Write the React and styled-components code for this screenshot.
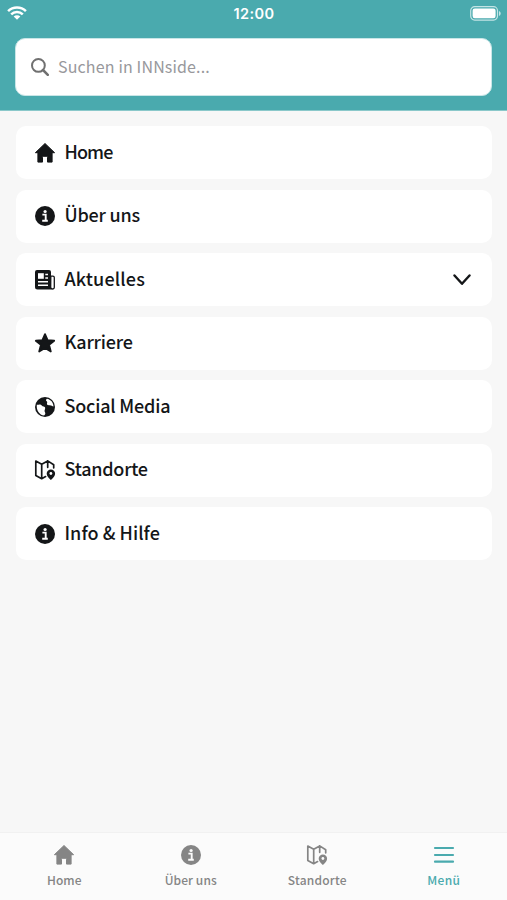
import React from "react";
import styled, { createGlobalStyle } from "styled-components";

const GlobalStyle = createGlobalStyle`
  * {
    box-sizing: border-box;
  }
  body {
    margin: 0;
    background: #f7f7f7;
    font-family: "Noto Sans CJK SC", "Noto Sans", sans-serif;
  }
`;

const HomeIcon = () => (
  <svg viewBox="0 0 20 20">
    <path
      d="M10 .5 19.6 9.7h-2.5v9.4h-4.6v-4.6q0-1.2-1.2-1.2H8.7q-1.2 0-1.2 1.2v4.6H2.9V9.7H.4Z"
      fill="currentColor"
      stroke="currentColor"
      strokeWidth="1"
      strokeLinejoin="round"
    />
  </svg>
);

const InfoIcon = ({ hole = "#fff" }) => (
  <svg viewBox="0 0 20 20">
    <circle cx="10" cy="10" r="10" fill="currentColor" />
    <circle cx="10.1" cy="5.5" r="1.6" fill={hole} />
    <path
      d="M7.4 8.6h3.3v6M7.2 14.7h5.6"
      fill="none"
      stroke={hole}
      strokeWidth="1.9"
    />
  </svg>
);

const NewsIcon = () => (
  <svg viewBox="0 0 20 20" fill="none" stroke="currentColor">
    <path d="M15.8 6.2h2.1a1.4 1.4 0 0 1 1.4 1.4v9.6a1.8 1.8 0 0 1-3.6 0Z" strokeWidth="1.3" />
    <path
      d="M2 0h12a2 2 0 0 1 2 2v15.5q0 1.5 1 2H2.5A2.5 2.5 0 0 1 0 17V2a2 2 0 0 1 2-2Z"
      fill="currentColor"
      stroke="none"
    />
    <path d="M3 3.2h5.8v5.6H3Z" fill="#fff" stroke="none" />
    <path d="M10.300 4.500h2.700M10.300 8h2.700M3 11.700h10M3 15.200h10" stroke="#fff" strokeWidth="1.4" />
  </svg>
);

const StarIcon = () => (
  <svg viewBox="0 0 20 20">
    <path
      d="m10 1.1 2.6 6.1 6.6.5-5.1 4.200 1.700 6.600L10 15l-5.800 3.500 1.700-6.600L.8 7.700l6.600-.5Z"
      fill="currentColor"
      stroke="currentColor"
      strokeWidth="1.8"
      strokeLinejoin="round"
    />
  </svg>
);

const GlobeIcon = () => (
  <svg viewBox="0 0 20 20">
    <circle cx="10" cy="10" r="10" fill="currentColor" />
    <path
      d="M1.8 7.7C3.6 7.7 4.600 7 5.800 7.700 7 8.400 6.900 9.300 8.600 9.600 10.700 10 10.300 11.700 9.700 13 9.100 14.500 10.300 15.200 10.300 16.300 10.300 17.300 9.800 17.800 9.100 18.500 4.300 17.900 1.200 13.400 1.800 7.700Z"
      fill="#fff"
    />
    <path
      d="M11.900 1.700C15.700 2.300 18.400 5.400 18.500 9.500 17.100 9.400 16.300 8 14.400 8.300 12.600 8.500 11.600 7.500 12 6.300 12.400 5.200 12.300 4.600 11.400 3.900 10.600 3.200 11.200 2.400 11.900 1.700Z"
      fill="#fff"
    />
  </svg>
);

const MapIcon = ({ hole = "#fff" }) => (
  <svg viewBox="0 0 20 20" fill="none">
    <path
      d="M10.600 16.600 6.700 18.700.8 15.400V1.100l5.900 3.200 6-3.400 6 3.800v3.100M6.700 4.300v14.400M12.700.9v6.400"
      stroke="currentColor"
      strokeWidth="1.7"
      strokeLinejoin="round"
      strokeLinecap="round"
    />
    <path
      d="M15.900 20s-4.200-3-4.200-6.400a4.200 4.200 0 0 1 8.400 0c0 3.400-4.200 6.400-4.200 6.400Z"
      fill="currentColor"
    />
    <circle cx="15.9" cy="13.5" r="1.4" fill={hole} />
  </svg>
);

const MenuIcon = () => (
  <svg viewBox="0 0 20 20">
    <path
      d="M1 3h18M1 10h18M1 16.700h18"
      stroke="currentColor"
      strokeWidth="2.2"
      strokeLinecap="round"
    />
  </svg>
);

const menuItems = [
  { label: "Home", icon: HomeIcon, spacing: -0.9 },
  { label: "Über uns", icon: InfoIcon, spacing: -0.2 },
  { label: "Aktuelles", icon: NewsIcon, spacing: 0.15, expandable: true },
  { label: "Karriere", icon: StarIcon, spacing: -0.2 },
  { label: "Social Media", icon: GlobeIcon, spacing: -0.2 },
  { label: "Standorte", icon: MapIcon, spacing: -0.25 },
  { label: "Info & Hilfe", icon: InfoIcon, spacing: 0.05 },
];

const tabs = [
  { label: "Home", icon: HomeIcon, spacing: 0 },
  { label: "Über uns", icon: InfoIcon, spacing: 0.1 },
  { label: "Standorte", icon: MapIcon, spacing: 0.2 },
  { label: "Menü", icon: MenuIcon, spacing: 0.3, active: true },
];

export default function App() {
  return (
    <>
      <GlobalStyle />
      <Screen>
        <Header>
          <StatusBar>
            <svg width="20" height="14" viewBox="0 0 20 14">
              <g fill="none" stroke="#fff" strokeWidth="2.5">
                <path d="M1.1 5.2a12.6 12.6 0 0 1 17.8 0" />
                <path d="M4.2 8.4a8.2 8.2 0 0 1 11.6 0" />
              </g>
              <path d="M10 13.8 6.7 10.5a4.7 4.7 0 0 1 6.6 0Z" fill="#fff" />
            </svg>
            <Time>12:00</Time>
            <svg width="32" height="15" viewBox="0 0 32 15">
              <rect x=".7" y=".7" width="26.8" height="13.4" rx="4" fill="none" stroke="#c4e4e5" strokeWidth="1.2" />
              <rect x="2.6" y="2.5" width="23" height="9.8" rx="2.2" fill="#fff" />
              <path d="M29 5v5c1-.4 1.7-1.4 1.7-2.5S30 5.4 29 5Z" fill="#c4e4e5" />
            </svg>
          </StatusBar>
          <Search>
            <svg width="18" height="18" viewBox="0 0 18 18" fill="none" stroke="#707070" strokeWidth="2">
              <circle cx="7.4" cy="7.4" r="6.4" />
              <path d="m12 12 4.8 4.8" strokeWidth="2.5" strokeLinecap="round" />
            </svg>
            <Placeholder>Suchen in INNside...</Placeholder>
          </Search>
        </Header>

        <List>
          {menuItems.map(({ label, icon: Icon, spacing, expandable }) => (
            <Item key={label}>
              <Icon />
              <ItemLabel $spacing={spacing}>{label}</ItemLabel>
              {expandable && (
                <Chevron viewBox="0 0 18 12">
                  <path
                    d="m1.5 1.5 7.5 8.3 7.5-8.3"
                    fill="none"
                    stroke="currentColor"
                    strokeWidth="2.4"
                    strokeLinecap="round"
                    strokeLinejoin="round"
                  />
                </Chevron>
              )}
            </Item>
          ))}
        </List>

        <TabBar>
          {tabs.map(({ label, icon: Icon, spacing, active }) => (
            <Tab key={label} $active={active} $spacing={spacing}>
              <Icon hole="#fbfbfb" />
              <span>{label}</span>
            </Tab>
          ))}
        </TabBar>
      </Screen>
    </>
  );
}

const Screen = styled.div`
  display: flex;
  flex-direction: column;
  height: 900px;
  color: #141618;
`;

const Header = styled.header`
  height: 111px;
  padding: 0 15px;
  background: #4aaaae;
  border-bottom: 1px solid #8ac8ca;
`;

const StatusBar = styled.div`
  display: grid;
  grid-template-columns: 1fr auto 1fr;
  align-items: center;
  height: 38px;
  margin: 0 -8px;
  padding: 0 0 12px;

  > :last-child {
    justify-self: end;
    margin-right: -2px;
  }
`;

const Time = styled.span`
  color: #fff;
  font-family: Inter, sans-serif;
  font-size: 14.5px;
  font-weight: 600;
  letter-spacing: 0.4px;
  margin-left: 1px;
`;

const Search = styled.div`
  display: flex;
  align-items: center;
  gap: 9px;
  height: 58px;
  padding-left: 15px;
  background: #fff;
  border: 1px solid #c9e6e7;
  border-radius: 10px;
`;

const Placeholder = styled.span`
  margin-top: -2px;
  color: #98989c;
  font-size: 16px;
  line-height: 22px;
  letter-spacing: 0.15px;
  white-space: nowrap;
`;

const List = styled.main`
  display: flex;
  flex: 1;
  flex-direction: column;
  gap: 10.5px;
  padding: 15px 15px 0 16px;
`;

const Item = styled.div`
  display: flex;
  align-items: center;
  height: 53px;
  padding: 0 21px 0 19px;
  background: #fff;
  border-radius: 10px;

  > svg:first-child {
    flex: none;
    width: 20px;
    height: 20px;
    overflow: visible;
  }
`;

const ItemLabel = styled.span`
  flex: 1;
  margin: -4px 0 0 9.5px;
  font-size: 18px;
  font-weight: 500;
  line-height: 26px;
  letter-spacing: ${(p) => p.$spacing}px;
`;

const Chevron = styled.svg`
  width: 18px;
  height: 12px;
`;

const TabBar = styled.nav`
  display: grid;
  grid-template-columns: repeat(4, 1fr);
  height: 68px;
  padding: 12px 0 0 1px;
  background: #fbfbfb;
  border-top: 1px solid #f1f1f1;
`;

const Tab = styled.div`
  display: flex;
  flex-direction: column;
  align-items: center;
  gap: 6px;
  color: ${(p) => (p.$active ? "#4aaaae" : "#858585")};
  font-size: 12px;
  font-weight: 500;
  line-height: 18px;
  letter-spacing: ${(p) => p.$spacing}px;

  svg {
    width: 20px;
    height: 20px;
    overflow: visible;
  }
`;
